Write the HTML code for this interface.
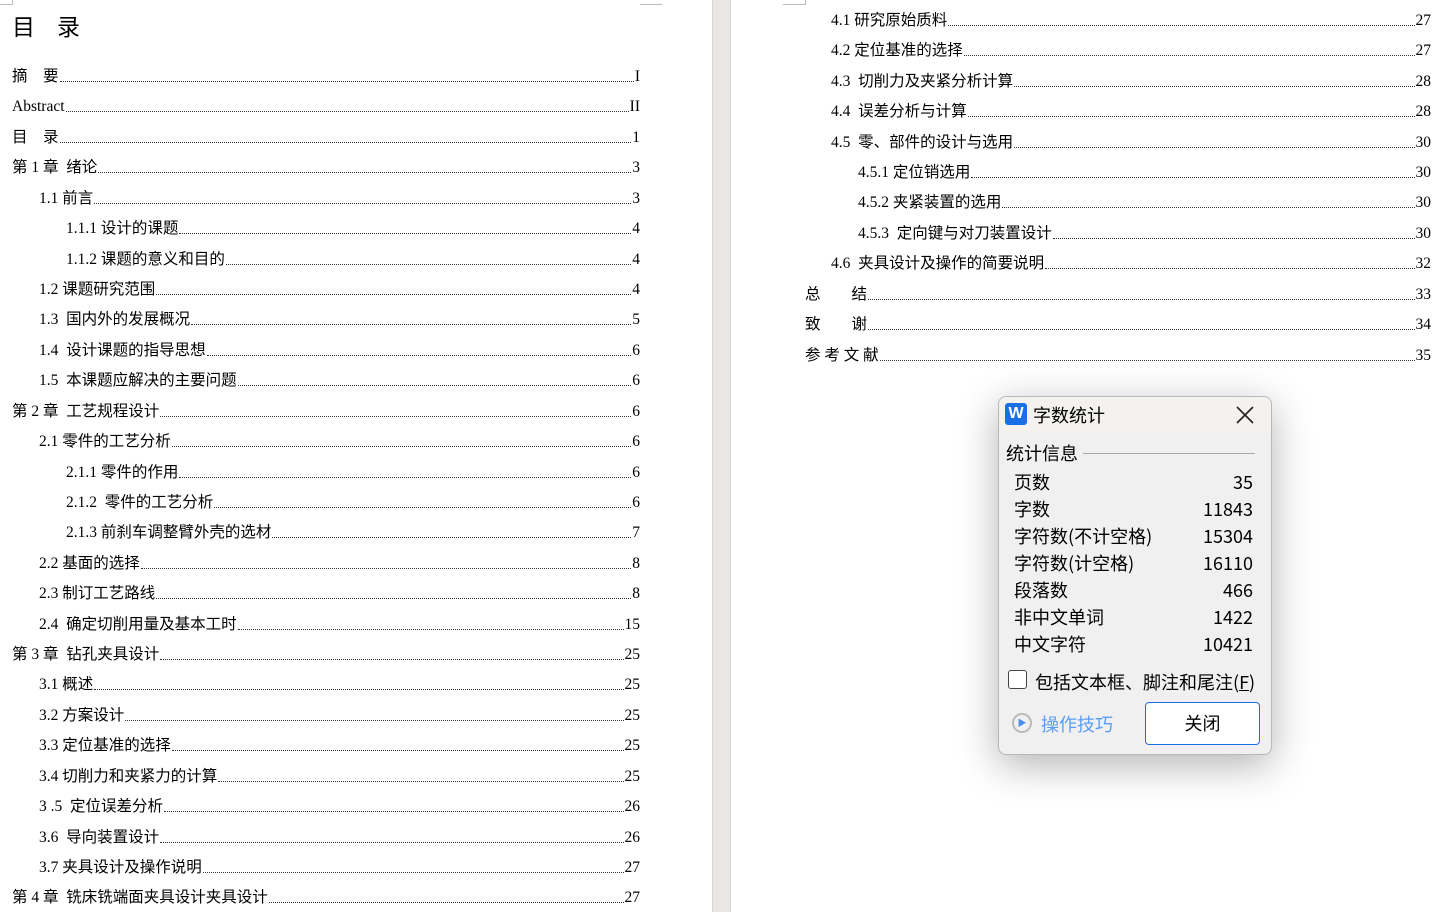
<!DOCTYPE html>
<html><head><meta charset="utf-8"><style>
body{margin:0;width:1446px;height:912px;overflow:hidden;background:#fff;font-family:"Liberation Serif","Noto Sans CJK SC",serif;color:#000;position:relative}
.gap{position:absolute;left:712px;top:0;width:19px;height:912px;background:#e9e6e6;border-left:1px solid #d6d4d4;border-right:1px solid #d6d4d4;box-sizing:border-box}
.e{position:absolute;height:20px;display:flex;align-items:flex-end;font-size:15.5px;line-height:18px;white-space:pre}
.e .d{flex:1;border-bottom:1px dotted #333;margin:0 1px 4px 1px}
h1{position:absolute;left:12px;top:8px;margin:0;font-size:23px;font-weight:normal;font-family:"Noto Sans CJK SC",sans-serif;letter-spacing:22px}
.dlg{position:absolute;left:998px;top:396px;width:272px;height:357px;background:#f0f0f0;border:1px solid #b8b8b8;border-radius:8px;box-shadow:0 10px 40px rgba(0,0,0,.3);font-family:"Noto Sans CJK SC",sans-serif;overflow:hidden}
.tb{height:36px;background:#f4f2ee;position:relative}
.dlg .r{position:absolute;left:15px;width:239px;display:flex;justify-content:space-between;font-size:18px;line-height:22px}
</style></head><body>
<div class="gap"></div>
<div style="position:absolute;left:0;top:0;width:12px;height:4px;border-right:1px solid #bbb;border-bottom:1px solid #bbb"></div>
<div style="position:absolute;left:640px;top:0;width:22px;height:4px;border-bottom:1px solid #bbb"></div>
<div style="position:absolute;left:783px;top:0;width:22px;height:4px;border-right:1px solid #bbb;border-bottom:1px solid #bbb"></div>
<h1>目录</h1>
<div id="L"></div>
<div class="dlg">
<div class="tb">
<div style="position:absolute;left:6px;top:6px;width:22px;height:22px;background:#1a6fe6;border-radius:3px;color:#fff;font:bold 16px 'Liberation Sans',sans-serif;text-align:center;line-height:22px">W</div>
<div style="position:absolute;left:34px;top:5px;font-size:18px">字数统计</div>
<svg style="position:absolute;left:237px;top:9px" width="18" height="18"><path d="M1 1L17 17M17 1L1 17" stroke="#222" stroke-width="1.6"/></svg>
</div>
<div style="position:absolute;left:7px;top:43px;font-size:18px">统计信息</div>
<div style="position:absolute;left:84px;top:56px;width:172px;border-top:1px solid #aaa"></div>
<div class="r" style="top:74px"><span>页数</span><span>35</span></div>
<div class="r" style="top:101px"><span>字数</span><span>11843</span></div>
<div class="r" style="top:128px"><span>字符数(不计空格)</span><span>15304</span></div>
<div class="r" style="top:155px"><span>字符数(计空格)</span><span>16110</span></div>
<div class="r" style="top:182px"><span>段落数</span><span>466</span></div>
<div class="r" style="top:209px"><span>非中文单词</span><span>1422</span></div>
<div class="r" style="top:236px"><span>中文字符</span><span>10421</span></div>
<div style="position:absolute;left:9px;top:273px;width:17px;height:17px;border:1px solid #444;border-radius:3px;background:#fff"></div>
<div style="position:absolute;left:36px;top:272px;font-size:18px">包括文本框、脚注和尾注(<u>F</u>)</div>
<div style="position:absolute;left:13px;top:316px;width:20px;height:20px;border:2px solid #bbb;border-radius:50%;box-sizing:border-box;color:#4a8ff0;font-size:9px;text-align:center;line-height:16px">▶</div>
<div style="position:absolute;left:42px;top:314px;font-size:18px;color:#5b9cf5">操作技巧</div>
<div style="position:absolute;left:146px;top:305px;width:115px;height:43px;border:1px solid #1a6fe6;border-radius:4px;background:#fff;font-size:18px;text-align:center;line-height:41px;box-sizing:border-box">关闭</div>
</div>
<script>
var L=[[12,75,"摘　要","I"],[12,105,"Abstract","II"],[12,136,"目　录","1"],[12,166,"第 1 章  绪论","3"],[39,197,"1.1 前言","3"],[66,227,"1.1.1 设计的课题","4"],[66,258,"1.1.2 课题的意义和目的","4"],[39,288,"1.2 课题研究范围","4"],[39,318,"1.3  国内外的发展概况","5"],[39,349,"1.4  设计课题的指导思想","6"],[39,379,"1.5  本课题应解决的主要问题","6"],[12,410,"第 2 章  工艺规程设计","6"],[39,440,"2.1 零件的工艺分析","6"],[66,471,"2.1.1 零件的作用","6"],[66,501,"2.1.2  零件的工艺分析","6"],[66,531,"2.1.3 前刹车调整臂外壳的选材","7"],[39,562,"2.2 基面的选择","8"],[39,592,"2.3 制订工艺路线","8"],[39,623,"2.4  确定切削用量及基本工时","15"],[12,653,"第 3 章  钻孔夹具设计","25"],[39,683,"3.1 概述","25"],[39,714,"3.2 方案设计","25"],[39,744,"3.3 定位基准的选择","25"],[39,775,"3.4 切削力和夹紧力的计算","25"],[39,805,"3 .5  定位误差分析","26"],[39,836,"3.6  导向装置设计","26"],[39,866,"3.7 夹具设计及操作说明","27"],[12,896,"第 4 章  铣床铣端面夹具设计夹具设计","27"]];
var R=[[831,19,"4.1 研究原始质料","27"],[831,49,"4.2 定位基准的选择","27"],[831,80,"4.3  切削力及夹紧分析计算","28"],[831,110,"4.4  误差分析与计算","28"],[831,141,"4.5  零、部件的设计与选用","30"],[858,171,"4.5.1 定位销选用","30"],[858,201,"4.5.2 夹紧装置的选用","30"],[858,232,"4.5.3  定向键与对刀装置设计","30"],[831,262,"4.6  夹具设计及操作的简要说明","32"],[805,293,"总　　结","33"],[805,323,"致　　谢","34"],[805,354,"参 考 文 献","35"]];
var h="";
function add(a,right){a.forEach(function(e){h+='<div class="e" style="left:'+e[0]+'px;top:'+(e[1]-9)+'px;width:'+(right-e[0])+'px"><span>'+e[2]+'</span><span class="d"></span><span>'+e[3]+'</span></div>';});}
add(L,640);add(R,1431);
document.getElementById("L").innerHTML=h;
</script>
</body></html>
